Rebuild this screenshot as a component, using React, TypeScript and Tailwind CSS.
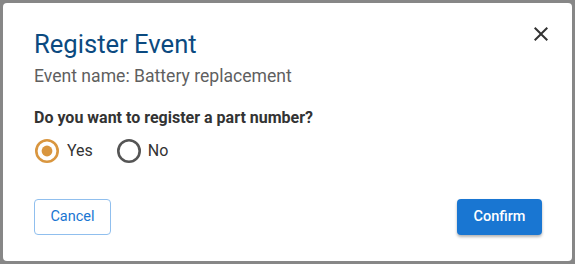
import { useState } from 'react'

function CloseIcon() {
  return (
    <svg viewBox="0 0 24 24" className="h-6 w-6 fill-[#333333]">
      <path d="M19 6.41 17.59 5 12 10.59 6.41 5 5 6.41 10.59 12 5 17.59 6.41 19 12 13.41 17.59 19 19 17.59 13.41 12z" />
    </svg>
  )
}

function RadioIcon({ checked }: { checked: boolean }) {
  return (
    <svg viewBox="0 0 24 24" className="h-6 w-6">
      <circle
        cx="12"
        cy="12"
        r="10.7"
        fill="none"
        strokeWidth="2.6"
        className={checked ? 'stroke-[#d9963f]' : 'stroke-[#555555]'}
      />
      {checked && <circle cx="12" cy="12" r="5.4" className="fill-[#d9963f]" />}
    </svg>
  )
}

function App() {
  const [answer, setAnswer] = useState<'yes' | 'no'>('yes')

  return (
    <div className="h-[264px] w-[575px] bg-[#878787] p-[3px] font-['Roboto',sans-serif]">
      <div className="relative flex h-full flex-col rounded-[4px] bg-white pb-[26px] pl-[31px] pr-[30px] pt-[25px]">
        <button className="absolute right-[19px] top-[19px]" aria-label="Close">
          <CloseIcon />
        </button>

        <h2 className="text-[25.6px] leading-[32px] text-[#0b4a80]">Register Event</h2>
        <p className="mt-[4px] text-[17.6px] leading-[24px] text-[#5f5f5f]">Event name: Battery replacement</p>

        <p className="mt-[18px] text-[16px] font-bold leading-[24px] text-[#333333]">
          Do you want to register a part number?
        </p>

        <div className="mt-[9px] flex items-center">
          <label className="flex cursor-pointer items-center gap-2" onClick={() => setAnswer('yes')}>
            <span className="ml-px">
              <RadioIcon checked={answer === 'yes'} />
            </span>
            <span className="text-[16px] leading-[24px] text-[#333333]">Yes</span>
          </label>
          <label className="ml-[24px] flex cursor-pointer items-center gap-[7px]" onClick={() => setAnswer('no')}>
            <RadioIcon checked={answer === 'no'} />
            <span className="text-[16px] leading-[24px] text-[#333333]">No</span>
          </label>
        </div>

        <div className="mt-auto flex items-center justify-between">
          <button className="h-[36px] w-[77px] rounded-[4px] border border-[#90bfee] text-[14.5px] text-[#1976d2]">
            Cancel
          </button>
          <button className="h-[36px] w-[85px] rounded-[4px] bg-[#1976d2] text-[14.5px] font-medium text-white shadow-[0_2px_3px_rgba(0,0,0,0.3)]">
            Confirm
          </button>
        </div>
      </div>
    </div>
  )
}

export default App
